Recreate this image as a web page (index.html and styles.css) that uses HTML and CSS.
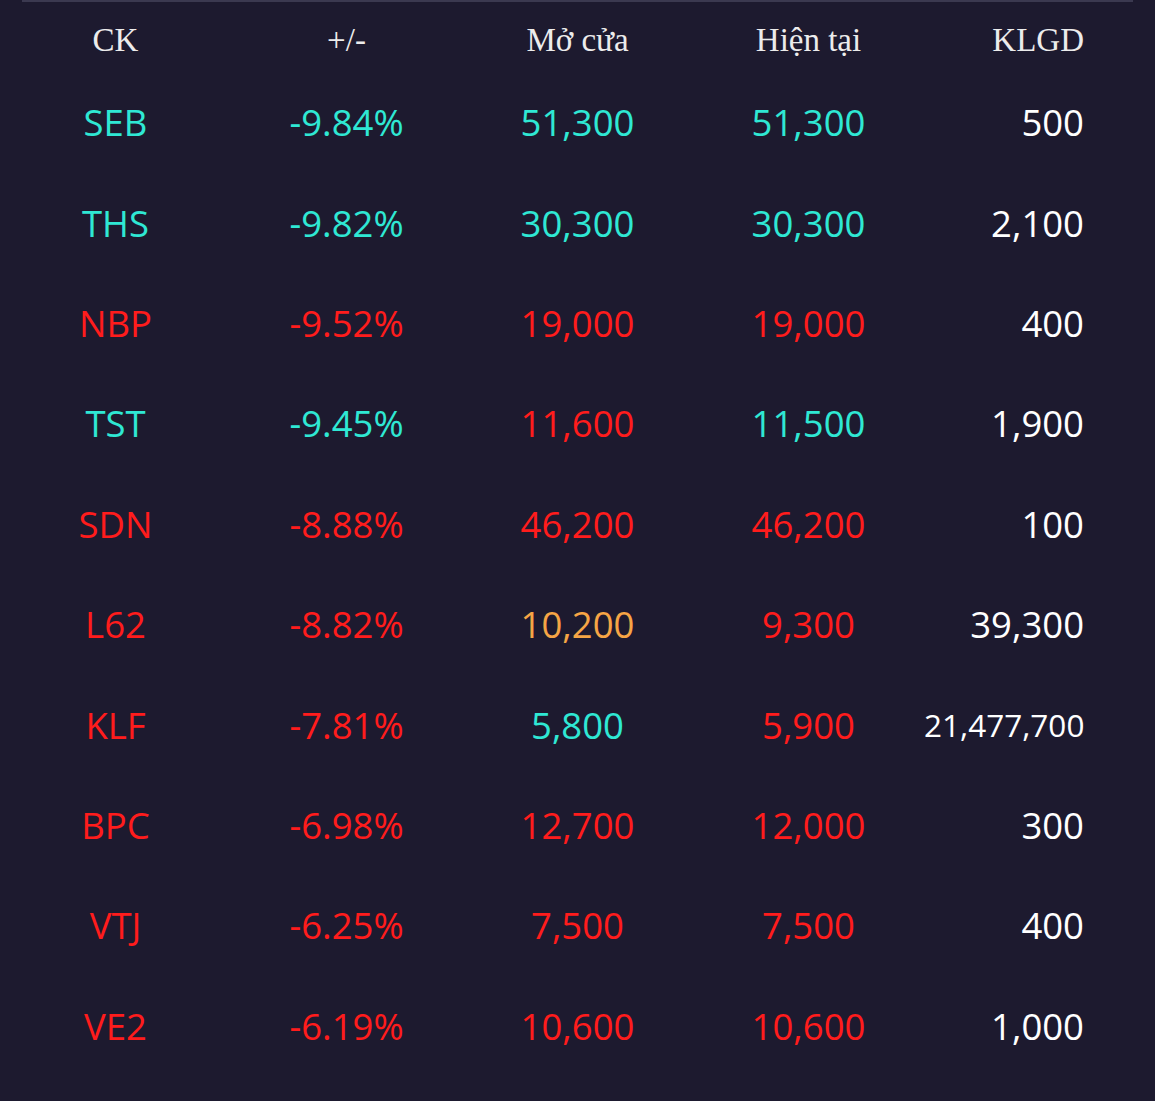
FILE: index.html
```html
<!DOCTYPE html>
<html lang="vi">
<head>
<meta charset="utf-8">
<title>Bảng giá</title>
<link rel="stylesheet" href="styles.css">
</head>
<body>
<div class="topline"></div>
<div class="table">
  <div class="row head">
    <div class="c">CK</div><div class="c">+/-</div><div class="c">Mở cửa</div><div class="c">Hiện tại</div><div class="c r">KLGD</div>
  </div>
  <div class="row"><div class="c cy">SEB</div><div class="c cy">-9.84%</div><div class="c cy">51,300</div><div class="c cy">51,300</div><div class="c r wh">500</div></div>
  <div class="row"><div class="c cy">THS</div><div class="c cy">-9.82%</div><div class="c cy">30,300</div><div class="c cy">30,300</div><div class="c r wh">2,100</div></div>
  <div class="row"><div class="c rd">NBP</div><div class="c rd">-9.52%</div><div class="c rd">19,000</div><div class="c rd">19,000</div><div class="c r wh">400</div></div>
  <div class="row"><div class="c cy">TST</div><div class="c cy">-9.45%</div><div class="c rd">11,600</div><div class="c cy">11,500</div><div class="c r wh">1,900</div></div>
  <div class="row"><div class="c rd">SDN</div><div class="c rd">-8.88%</div><div class="c rd">46,200</div><div class="c rd">46,200</div><div class="c r wh">100</div></div>
  <div class="row"><div class="c rd">L62</div><div class="c rd">-8.82%</div><div class="c or">10,200</div><div class="c rd">9,300</div><div class="c r wh">39,300</div></div>
  <div class="row"><div class="c rd">KLF</div><div class="c rd">-7.81%</div><div class="c cy">5,800</div><div class="c rd">5,900</div><div class="c r wh small">21,477,700</div></div>
  <div class="row"><div class="c rd">BPC</div><div class="c rd">-6.98%</div><div class="c rd">12,700</div><div class="c rd">12,000</div><div class="c r wh">300</div></div>
  <div class="row"><div class="c rd">VTJ</div><div class="c rd">-6.25%</div><div class="c rd">7,500</div><div class="c rd">7,500</div><div class="c r wh">400</div></div>
  <div class="row"><div class="c rd">VE2</div><div class="c rd">-6.19%</div><div class="c rd">10,600</div><div class="c rd">10,600</div><div class="c r wh">1,000</div></div>
</div>
</body>
</html>
```
FILE: styles.css
```css
html, body {
  margin: 0;
  padding: 0;
  background: #1d1a2f;
}
body {
  width: 1155px;
  height: 1101px;
  overflow: hidden;
  font-family: "Open Sans", "Noto Sans", sans-serif;
}
.topline {
  height: 2px;
  margin: 0 22px;
  background: #3b3950;
}
.table {
  display: flex;
  flex-direction: column;
}
.row {
  display: grid;
  grid-template-columns: repeat(5, 231px);
  height: 100.4px;
  align-items: center;
  font-size: 36.5px;
  font-weight: 500;
}
.row.head {
  height: 64px;
  padding-top: 6px;
  font-family: "Liberation Serif", "Times New Roman", serif;
  font-size: 33px;
  font-weight: 400;
  color: #ececec;
}
.c {
  text-align: center;
  white-space: nowrap;
}
.c.r {
  text-align: right;
  padding-right: 71px;
}
.cy { color: #2fe8d4; }
.rd { color: #ff1c1c; }
.or { color: #f6a545; }
.wh { color: #ffffff; }
.small { font-size: 31.5px; }
```
